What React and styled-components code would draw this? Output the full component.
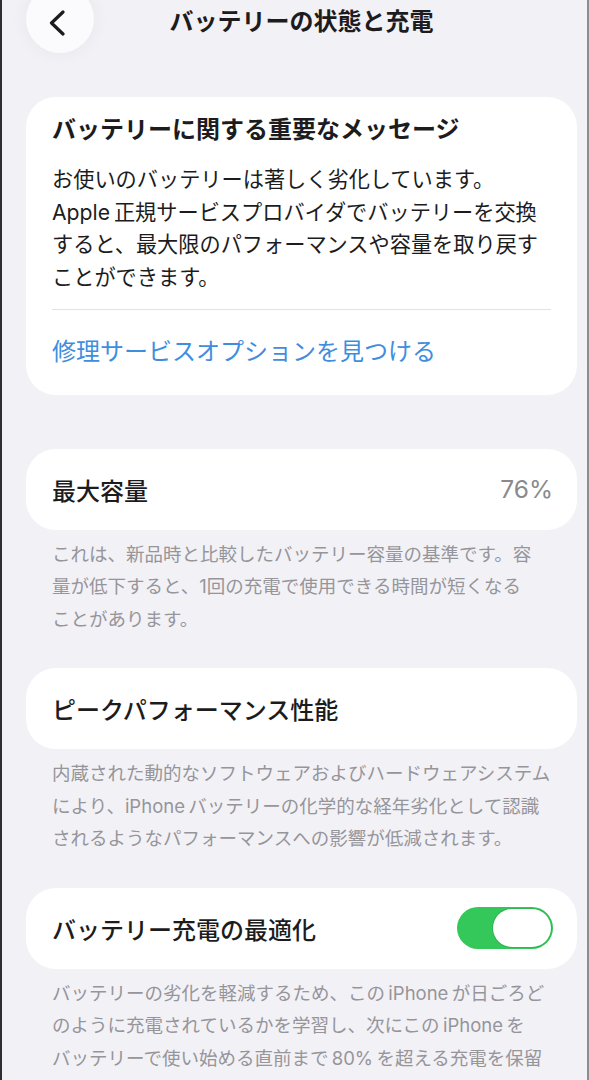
import React from 'react';
import styled, {createGlobalStyle} from 'styled-components';

const GlobalStyle = createGlobalStyle`
  html, body {
    margin: 0;
    padding: 0;
    background: #f2f1f6;
  }
  body {
    font-family: Inter, "Noto Sans CJK JP", sans-serif;
    color: #1c1c1e;
    -webkit-font-smoothing: antialiased;
  }
`;

const Screen = styled.div`
  box-sizing: border-box;
  min-height: 100vh;
  padding: 0 10px 40px 24px;
  border-left: 2px solid #2f2f31;
  border-right: 2px solid #8d8d90;
  background: #f2f1f6;
  overflow: hidden;
`;

const Header = styled.header`
  display: grid;
  grid-template-columns: 1fr auto 1fr;
  align-items: start;
`;

const BackButton = styled.button`
  box-sizing: border-box;
  width: 68px;
  height: 68px;
  margin-top: -15px;
  padding: 8px 6px 0 0;
  border: none;
  border-radius: 50%;
  background: #fbfbfd;
  box-shadow: 0 0 18px rgba(0, 0, 0, 0.05);
  display: flex;
  align-items: center;
  justify-content: center;
  justify-self: start;
`;

const Title = styled.h1`
  margin: 0;
  padding-top: 1px;
  font-size: 24px;
  line-height: 42px;
  font-weight: 700;
  color: #1c1c1e;
  white-space: nowrap;
`;

const Card = styled.section`
  background: #ffffff;
  border-radius: 30px;
`;

const MessageCard = styled(Card)`
  margin-top: 44px;
  padding: 16px 26px 26px;
`;

const CardTitle = styled.h2`
  margin: 0;
  font-size: 24px;
  line-height: 34px;
  font-weight: 700;
`;

const Body = styled.p`
  margin: 16px 0 0;
  font-size: 21.2px;
  line-height: 32.7px;
  white-space: pre;
`;

const Divider = styled.hr`
  margin: 15px 0 0;
  border: none;
  height: 1px;
  background: #e3e3e7;
`;

const ServiceLink = styled.a`
  display: block;
  margin-top: 25px;
  font-size: 24px;
  line-height: 34px;
  color: #3f8ede;
  text-decoration: none;
`;

const Group = styled.div`
  margin-top: ${p => p.$first ? 54 : 33}px;
`;

const RowCard = styled(Card)`
  box-sizing: border-box;
  height: 81px;
  padding: 0 24px 0 26px;
  display: flex;
  align-items: center;
  justify-content: space-between;
`;

const RowLabel = styled.span`
  font-size: 24px;
  font-weight: 500;
`;

const RowValue = styled.span`
  font-size: 24.5px;
  color: #8a8a8e;
`;

const Footnote = styled.p`
  margin: 8px 0 0;
  padding: 0 26px;
  font-size: 18.5px;
  line-height: 32.5px;
  color: #96959a;
  white-space: pre;
`;

const Track = styled.div`
  box-sizing: border-box;
  width: 96px;
  height: 42px;
  padding: 2px;
  border-radius: 21px;
  background: #34c759;
  display: flex;
  justify-content: ${p => p.$on ? 'flex-end' : 'flex-start'};
`;

const Knob = styled.div`
  width: 58px;
  height: 38px;
  border-radius: 19px;
  background: #ffffff;
  box-shadow: 0 0 0 1px rgba(46, 160, 70, 0.45);
`;

const Chevron = () => (
    <svg width="18" height="26" viewBox="0 0 18 26" fill="none">
        <path d="M15 2 L3.5 13 L15 24" stroke="#1c1c1e" strokeWidth="3.2" strokeLinecap="round" strokeLinejoin="round"/>
    </svg>
)

const App = () => {
    return (
        <Screen>
            <GlobalStyle/>
            <Header>
                <BackButton aria-label="戻る"><Chevron/></BackButton>
                <Title>バッテリーの状態と充電</Title>
            </Header>

            <MessageCard>
                <CardTitle>バッテリーに関する重要なメッセージ</CardTitle>
                <Body>{`お使いのバッテリーは著しく劣化しています。
Apple\u2009正規サービスプロバイダでバッテリーを交換
すると、最大限のパフォーマンスや容量を取り戻す
ことができます。`}</Body>
                <Divider/>
                <ServiceLink href="#">修理サービスオプションを見つける</ServiceLink>
            </MessageCard>

            <Group $first>
                <RowCard>
                    <RowLabel>最大容量</RowLabel>
                    <RowValue>76%</RowValue>
                </RowCard>
                <Footnote>{`これは、新品時と比較したバッテリー容量の基準です。容
量が低下すると、1回の充電で使用できる時間が短くなる
ことがあります。`}</Footnote>
            </Group>

            <Group>
                <RowCard>
                    <RowLabel>ピークパフォーマンス性能</RowLabel>
                </RowCard>
                <Footnote>{`内蔵された動的なソフトウェアおよびハードウェアシステム
により、iPhone\u2009バッテリーの化学的な経年劣化として認識
されるようなパフォーマンスへの影響が低減されます。`}</Footnote>
            </Group>

            <Group>
                <RowCard>
                    <RowLabel>バッテリー充電の最適化</RowLabel>
                    <Track $on><Knob/></Track>
                </RowCard>
                <Footnote>{`バッテリーの劣化を軽減するため、この\u2009iPhone\u2009が日ごろど
のように充電されているかを学習し、次にこの\u2009iPhone\u2009を
バッテリーで使い始める直前まで\u200980%\u2009を超える充電を保留
することがあります。`}</Footnote>
            </Group>
        </Screen>
    )
}

export default App;
